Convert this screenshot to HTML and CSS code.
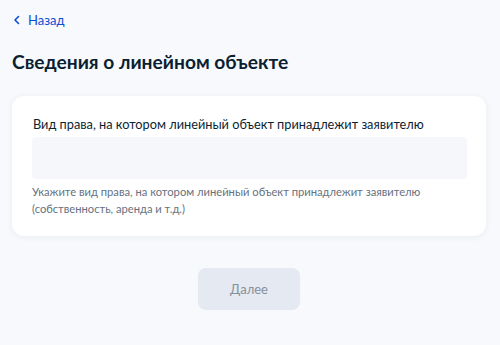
FILE: index.html
```html
<!DOCTYPE html>
<html>
  <head>
    <title>Сведения о линейном объекте</title>
    <link rel="stylesheet" href="styles.css">
  </head>
  <body>
    <div class="container">
      <a class="back" href="#">
        <svg width="8" height="10" viewBox="0 0 8 10">
          <path d="M5.5 1.5 L2 5 L5.5 8.5" fill="none" stroke="#0d4cd3" stroke-width="1.6" stroke-linecap="round" stroke-linejoin="round"/>
        </svg>
        <span>Назад</span>
      </a>

      <h1>Сведения о линейном объекте</h1>

      <div class="card">
        <label class="label" for="right">Вид права, на котором линейный объект принадлежит заявителю</label>
        <input id="right" class="input" type="text" />
        <p class="hint">Укажите вид права, на котором линейный объект принадлежит заявителю (собственность, аренда и т.д.)</p>
      </div>

      <div class="actions">
        <button class="btn" disabled>Далее</button>
      </div>
    </div>
  </body>
</html>
```

FILE: styles.css
```css
body {
  margin: 0;
  font-family: Lato, "Noto Sans", sans-serif;
  background: #f8f9fc;
  color: #0b1f33;
}
.container {
  width: 474px;
  padding: 12px 12px;
}
.back {
  display: flex;
  align-items: center;
  gap: 7px;
  color: #0d4cd3;
  text-decoration: none;
  font-size: 13px;
  line-height: 16px;
}
.back svg {
  margin-left: 1px;
}
h1 {
  margin: 22px 0 0;
  font-size: 19.2px;
  line-height: 24px;
  font-weight: 700;
}
.card {
  margin-top: 22px;
  background: white;
  border-radius: 12px;
  padding: 19px 19px 19px 20px;
  box-shadow: 0 1px 6px rgba(40, 60, 110, 0.08);
}
.label {
  display: block;
  font-size: 12.75px;
  line-height: 18px;
  margin-left: 1px;
}
.input {
  display: block;
  box-sizing: border-box;
  width: 100%;
  height: 42px;
  margin-top: 4px;
  border: none;
  border-radius: 4px;
  background: #f5f7fa;
}
.hint {
  margin: 4px 0 0;
  font-size: 11.2px;
  line-height: 17px;
  color: #66727f;
}
.actions {
  display: flex;
  justify-content: center;
  margin-top: 32px;
}
.btn {
  width: 102px;
  height: 42px;
  border: none;
  border-radius: 8px;
  background: #e4e9f2;
  color: #86909c;
  font-family: Lato, "Noto Sans", sans-serif;
  font-size: 13px;
}
```
